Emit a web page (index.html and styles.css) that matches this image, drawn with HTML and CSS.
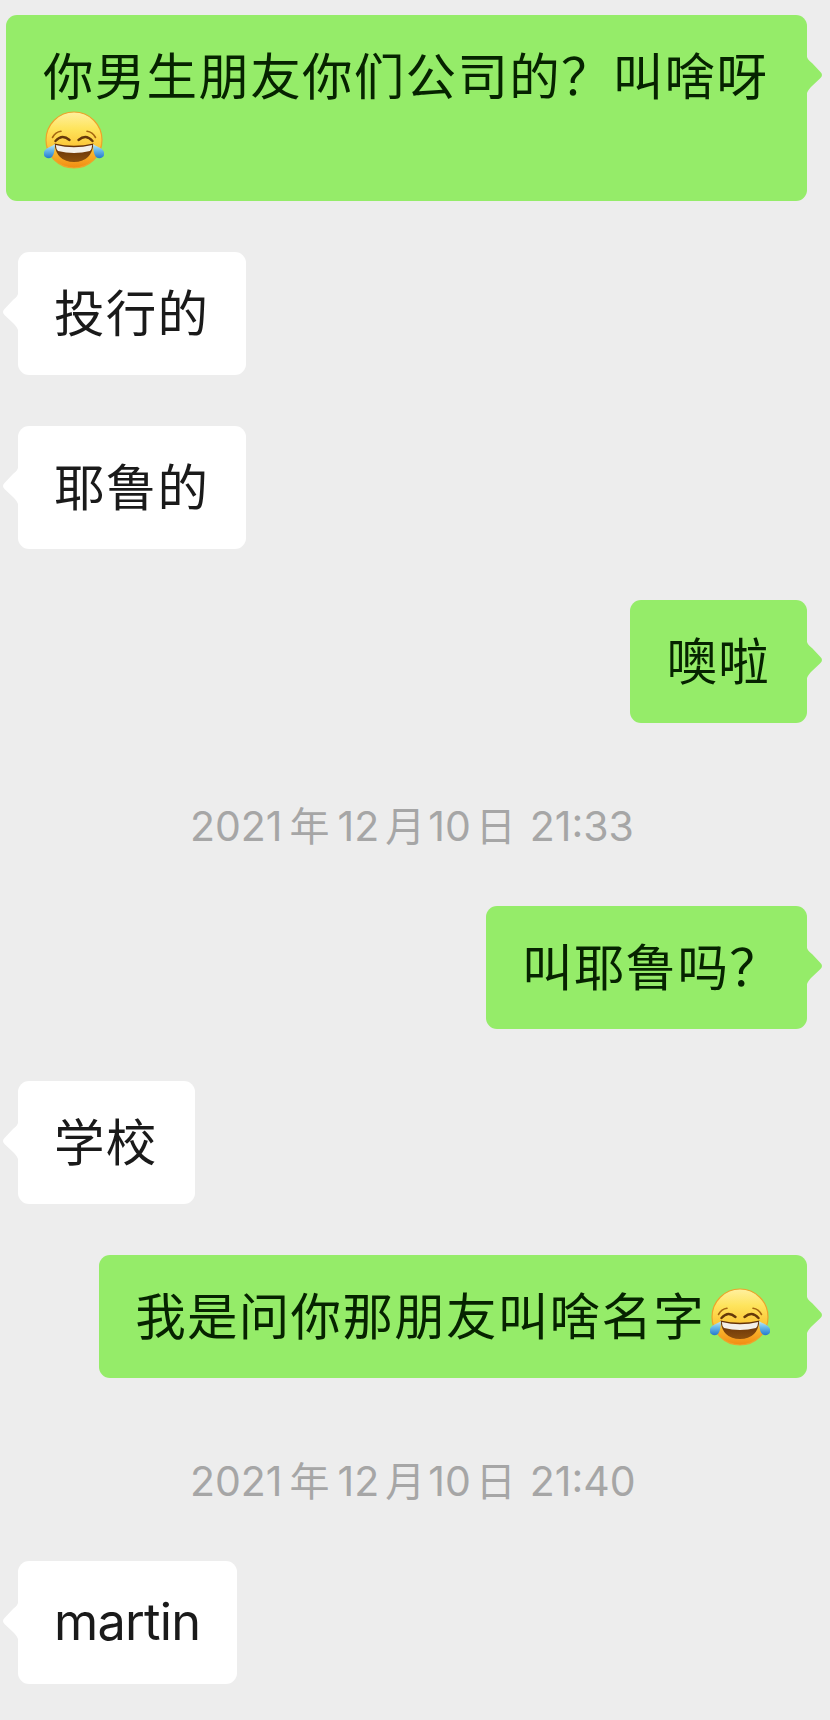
FILE: index.html
```html
<!DOCTYPE html>
<html lang="zh-CN">

<head>
    <meta charset="UTF-8">
    <meta name="viewport" content="width=device-width, initial-scale=1.0">
    <title>聊天记录</title>
    <link rel="stylesheet" href="styles.css">
</head>

<body>
    <!-- laughing face, used inside the messages -->
    <svg class="sprite" width="0" height="0">
        <defs>
            <linearGradient id="face" x1="0" y1="0" x2="0" y2="1">
                <stop offset="0" stop-color="#fff0a0" />
                <stop offset=".3" stop-color="#fee45c" />
                <stop offset=".62" stop-color="#fcc637" />
                <stop offset="1" stop-color="#f28b12" />
            </linearGradient>
            <linearGradient id="mouth" x1="0" y1="0" x2="0" y2="1">
                <stop offset="0" stop-color="#5d2c06" />
                <stop offset="1" stop-color="#8c500e" />
            </linearGradient>
            <linearGradient id="tear" x1="0" y1="0" x2="0" y2="1">
                <stop offset="0" stop-color="#c5ecf8" />
                <stop offset=".45" stop-color="#68b9ea" />
                <stop offset="1" stop-color="#2479cd" />
            </linearGradient>
            <symbol id="joy" viewBox="0 0 60 58">
                <circle cx="30" cy="29" r="28" fill="url(#face)" stroke="#eea32a" stroke-width="1.2" />
                <g fill="none" stroke-linecap="round">
                    <path d="M8.500 26.500Q11.500 21 17 20.300M51.500 26.500Q48.500 21 43 20.300" stroke="#a56711" stroke-width="1.6" />
                    <path d="M11.500 30Q18 22.500 25.500 29M34.500 29Q42 22.500 48.500 30" stroke="#65390a" stroke-width="2.400" />
                </g>
                <path d="M10.500 32.500Q30 37 49.500 32.500Q47.500 51 30 51Q12.500 51 10.500 32.500Z" fill="url(#mouth)" />
                <path d="M11.800 34Q30 38.500 48.200 34Q48 38 46 40Q30 44 14 40Q12 38 11.800 34Z" fill="#f3efe8" />
                <path d="M11 33C10.500 39 10.500 46.800 5 47.200C.5 47.400 -1.500 43.500 .5 40C2.500 36.500 7.500 35.500 11 33Z" fill="url(#tear)" />
                <path d="M49 33C49.500 39 49.500 46.800 55 47.200C59.500 47.400 61.500 43.500 59.500 40C57.500 36.500 52.500 35.500 49 33Z" fill="url(#tear)" />
            </symbol>
        </defs>
    </svg>

    <div class="chat">
        <div class="message mine">
            <div class="bubble long">你男生朋友你们公司的？叫啥呀<svg class="emoji"><use href="#joy" /></svg>
                <svg class="tail" viewBox="0 0 16 36"><path d="M0 0C1 3 3 4.500 5 6L13 14.500Q17 18 13 21.500L5 29C3 31 1 33 0 36Z" /></svg>
            </div>
        </div>

        <div class="message">
            <div class="bubble">投行的
                <svg class="tail" viewBox="0 0 16 36"><path d="M0 0C1 3 3 4.500 5 6L13 14.500Q17 18 13 21.500L5 29C3 31 1 33 0 36Z" /></svg>
            </div>
        </div>

        <div class="message">
            <div class="bubble">耶鲁的
                <svg class="tail" viewBox="0 0 16 36"><path d="M0 0C1 3 3 4.500 5 6L13 14.500Q17 18 13 21.500L5 29C3 31 1 33 0 36Z" /></svg>
            </div>
        </div>

        <div class="message mine">
            <div class="bubble">噢啦
                <svg class="tail" viewBox="0 0 16 36"><path d="M0 0C1 3 3 4.500 5 6L13 14.500Q17 18 13 21.500L5 29C3 31 1 33 0 36Z" /></svg>
            </div>
        </div>

        <div class="time"><span>2021</span>年<span class="month">12</span>月<span class="day">10</span>日<span class="clock">21:33</span></div>

        <div class="message mine">
            <div class="bubble question">叫耶鲁吗？
                <svg class="tail" viewBox="0 0 16 36"><path d="M0 0C1 3 3 4.500 5 6L13 14.500Q17 18 13 21.500L5 29C3 31 1 33 0 36Z" /></svg>
            </div>
        </div>

        <div class="message">
            <div class="bubble">学校
                <svg class="tail" viewBox="0 0 16 36"><path d="M0 0C1 3 3 4.500 5 6L13 14.500Q17 18 13 21.500L5 29C3 31 1 33 0 36Z" /></svg>
            </div>
        </div>

        <div class="message mine">
            <div class="bubble">我是问你那朋友叫啥名字<svg class="emoji"><use href="#joy" /></svg>
                <svg class="tail" viewBox="0 0 16 36"><path d="M0 0C1 3 3 4.500 5 6L13 14.500Q17 18 13 21.500L5 29C3 31 1 33 0 36Z" /></svg>
            </div>
        </div>

        <div class="time"><span>2021</span>年<span class="month">12</span>月<span class="day">10</span>日<span class="clock">21:40</span></div>

        <div class="message">
            <div class="bubble latin">martin
                <svg class="tail" viewBox="0 0 16 36"><path d="M0 0C1 3 3 4.500 5 6L13 14.500Q17 18 13 21.500L5 29C3 31 1 33 0 36Z" /></svg>
            </div>
        </div>
    </div>
</body>

</html>
```
FILE: styles.css
```css
* {
    box-sizing: border-box;
}

body {
    margin: 0;
    background: #ededed;
    font-family: "Noto Sans CJK SC", sans-serif;
}

.sprite {
    position: absolute;
}

.chat {
    display: flex;
    flex-direction: column;
    gap: 51.1px;
    min-height: 1720px;
    padding: 15px 23px 35px 18px;
}

.message {
    display: flex;
}

.mine {
    justify-content: flex-end;
}

.bubble {
    position: relative;
    padding: 27px 37px 33px 36px;
    border-radius: 11px;
    background: #fff;
    color: #1a1a1a;
    font-size: 50.5px;
    line-height: 63px;
    letter-spacing: 1.3px;
}

.mine .bubble {
    background: #95ec69;
    color: #062300;
}

.mine .long {
    flex: 0 0 801px;
    padding-left: 37px;
    padding-right: 36px;
}

.question {
    width: 321px;
    padding-right: 20px;
    white-space: nowrap;
}

.latin {
    width: 219px;
    padding-top: 29px;
    padding-bottom: 31px;
    font-family: Inter, sans-serif;
    letter-spacing: -.8px;
}

.tail {
    position: absolute;
    top: 42px;
    right: 100%;
    width: 16px;
    height: 36px;
    fill: #fff;
    transform: scaleX(-1);
}

.mine .tail {
    right: auto;
    left: 100%;
    fill: #95ec69;
    transform: none;
}

.emoji {
    display: inline-block;
    width: 60px;
    height: 58px;
    margin: -10px 0 -10px 5px;
    vertical-align: -1px;
}

.long .emoji {
    margin-left: 1px;
}

.time {
    display: flex;
    align-items: baseline;
    height: 81px;
    padding: 10px 0 0 172px;
    color: #a6a6a6;
    font-size: 40px;
    line-height: 81px;
    white-space: nowrap;
}

.time span {
    margin: 0 7px 0 0;
    font-family: Inter, sans-serif;
    font-size: 41px;
}

.time .month {
    margin: 0 6px 0 8px;
}

.time .day {
    margin: 0 5px 0 3px;
}

.time .clock {
    margin: 0 0 0 14px;
}
```
